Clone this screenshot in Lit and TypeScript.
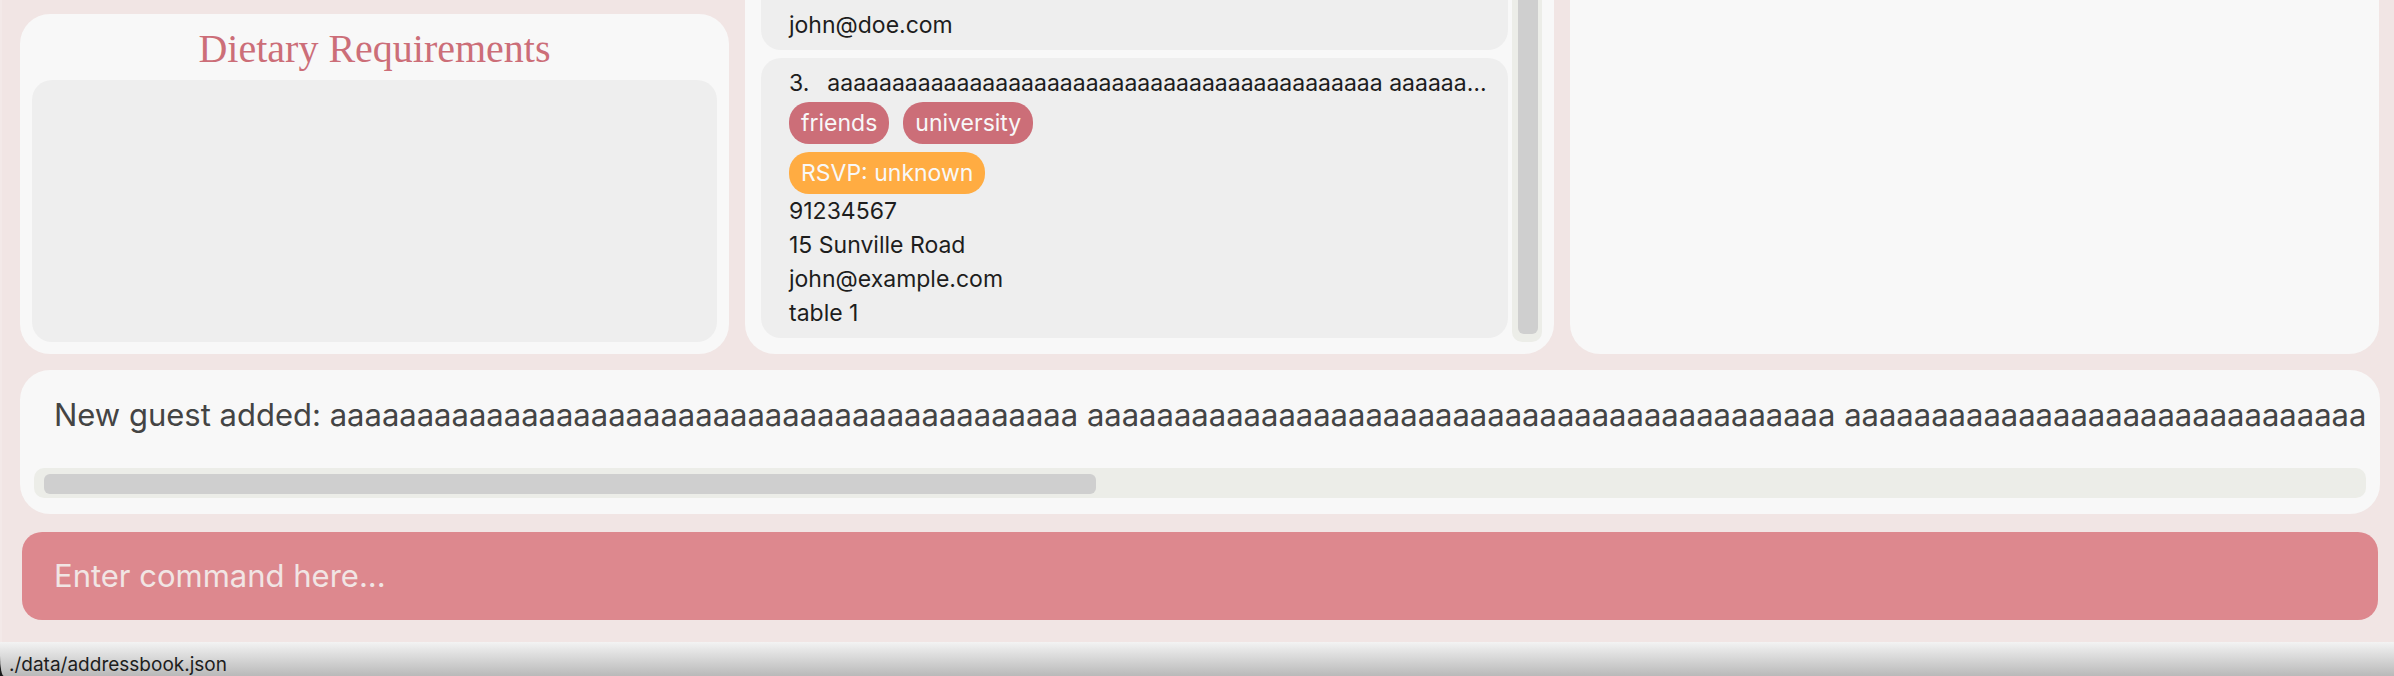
import { LitElement, html, css } from "lit";
import { customElement, state } from "lit/decorators.js";

interface Guest {
  index: number;
  name: string;
  tags: string[];
  rsvp: string;
  phone: string;
  address: string;
  email: string;
  table: string;
}

const LONG_NAME = Array(6).fill("a".repeat(43)).join(" ");

@customElement("guest-card")
export class GuestCard extends LitElement {
  static properties = { guest: { attribute: false } };
  declare guest: Guest;

  static styles = css`
    :host {
      display: block;
      flex: none;
      padding: 8px 20px 8px 28px;
      border-radius: 20px;
      background: #eeeeee;
      color: #1d1d1d;
      font-size: 23px;
      line-height: 34px;
    }
    .name {
      display: flex;
      gap: 18px;
      margin: 0 0 2px;
      font: inherit;
    }
    .name-text {
      overflow: hidden;
      white-space: nowrap;
      text-overflow: ellipsis;
    }
    .chips {
      display: flex;
      gap: 14px;
      margin-bottom: 8px;
    }
    .chips.last {
      margin-bottom: 0;
    }
    .chip {
      padding: 4px 12px;
      border-radius: 20px;
      background: #cc6e78;
      color: #f8f8f8;
    }
    .chip.rsvp {
      background: #ffac42;
    }
  `;

  render() {
    const g = this.guest;
    return html`
      <h3 class="name"><span>${g.index}.</span><span class="name-text">${g.name}</span></h3>
      <div class="chips">${g.tags.map((t) => html`<span class="chip">${t}</span>`)}</div>
      <div class="chips last"><span class="chip rsvp">RSVP: ${g.rsvp}</span></div>
      <div>${g.phone}</div>
      <div>${g.address}</div>
      <div>${g.email}</div>
      ${g.table ? html`<div>${g.table}</div>` : ""}
    `;
  }
}

@customElement("app-root")
export class AppRoot extends LitElement {
  @state() private guests: Guest[] = [
    { index: 2, name: "John Doe", tags: ["friends"], rsvp: "unknown", phone: "98765432", address: "8 Scotts Rd", email: "john@doe.com", table: "" },
    { index: 3, name: LONG_NAME, tags: ["friends", "university"], rsvp: "unknown", phone: "91234567", address: "15 Sunville Road", email: "john@example.com", table: "table 1" },
  ];

  static styles = css`
    :host {
      display: flex;
      flex-direction: column;
      height: 100vh;
      overflow: hidden;
      background: #f1e5e4;
      font-family: Inter, "Liberation Sans", sans-serif;
    }
    * {
      box-sizing: border-box;
    }
    main {
      flex: 1;
      min-height: 0;
      display: flex;
      flex-direction: column;
      padding: 0 14px 22px 18px;
      border-left: 2px solid #f3e9e8;
    }
    .columns {
      flex: 1;
      min-height: 0;
      display: grid;
      grid-template-columns: 709fr 809fr 809fr;
      gap: 16px;
      padding-right: 1px;
    }
    .panel {
      min-width: 0;
      min-height: 0;
      background: #f8f8f8;
      border-radius: 30px;
    }
    .open-top {
      border-radius: 0 0 30px 30px;
    }
    .diet {
      display: flex;
      flex-direction: column;
      margin-top: 14px;
      padding: 12px;
    }
    .diet h2 {
      margin: 0;
      color: #cc6e78;
      font: 400 40px/46px "Liberation Serif", serif;
      text-align: center;
    }
    .diet-body {
      flex: 1;
      margin-top: 8px;
      border-radius: 20px;
      background: #eeeeee;
    }
    .guests {
      display: flex;
      gap: 4px;
      padding: 0 12px 12px 16px;
    }
    .list {
      flex: 1;
      min-width: 0;
      display: flex;
      flex-direction: column;
      justify-content: flex-end;
      gap: 8px;
      padding-bottom: 4px;
      overflow: hidden;
    }
    .track {
      display: flex;
      background: #ecede8;
      border-radius: 10px;
    }
    .thumb {
      flex: 1;
      background: #cfcfcf;
      border-radius: 6px;
    }
    .track.vertical {
      width: 30px;
      padding: 0 4px 8px 6px;
      border-radius: 0 0 10px 10px;
    }
    .vertical .thumb {
      border-radius: 0 0 6px 6px;
    }
    .result {
      margin-top: 16px;
      padding: 14px 14px 16px;
    }
    .message {
      height: 84px;
      padding: 13px 0 0 20px;
      overflow: hidden;
      white-space: nowrap;
      color: #444444;
      font-size: 31px;
      line-height: 36px;
    }
    .track.horizontal {
      height: 30px;
      padding: 6px 10px 4px;
    }
    .horizontal .thumb {
      flex: 0 0 auto;
      width: 45.5%;
    }
    .command {
      height: 88px;
      margin: 18px 2px 0;
      padding: 0 32px 2px;
      border: 0;
      border-radius: 20px;
      outline: 0;
      background: #dd888e;
      color: #f1e5e4;
      font: 31px/36px Inter, "Liberation Sans", sans-serif;
    }
    .command::placeholder {
      color: #f1e5e4;
      opacity: 1;
    }
    footer {
      background: #1a1a1a;
    }
    .status {
      height: 34px;
      padding: 8px 9px 0;
      overflow: hidden;
      border-bottom-left-radius: 4px 20px;
      background: linear-gradient(#f3f3f3, #b9b9b9);
      color: #1d1d1d;
      font-size: 19px;
      line-height: 30px;
    }
  `;

  render() {
    return html`
      <main>
        <div class="columns">
          <section class="panel diet">
            <h2>Dietary Requirements</h2>
            <div class="diet-body"></div>
          </section>
          <section class="panel open-top guests">
            <div class="list">${this.guests.map((g) => html`<guest-card .guest=${g}></guest-card>`)}</div>
            <div class="track vertical"><div class="thumb"></div></div>
          </section>
          <section class="panel open-top"></section>
        </div>
        <section class="panel result">
          <div class="message">New guest added: ${LONG_NAME}</div>
          <div class="track horizontal"><div class="thumb"></div></div>
        </section>
        <input class="command" type="text" aria-label="Command" placeholder="Enter command here..." />
      </main>
      <footer><div class="status">./data/addressbook.json</div></footer>
    `;
  }
}
